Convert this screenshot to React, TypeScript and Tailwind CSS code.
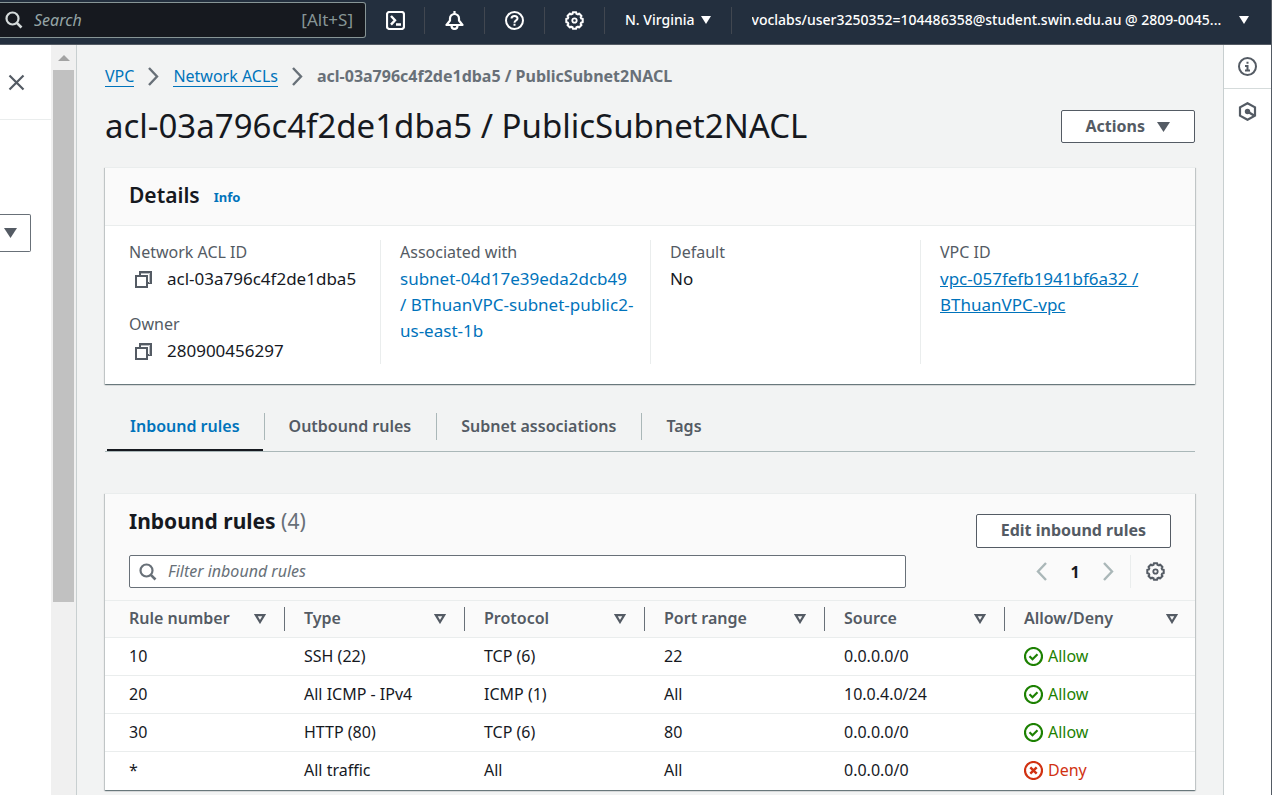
import React from "react";

const FONT = "font-['Noto_Sans','Open_Sans',sans-serif]";
const CARD =
  "border-t border-[#eaeded] bg-white shadow-[0_1px_1px_0_rgba(0,28,36,0.4),1px_1px_1px_0_rgba(0,28,36,0.15),-1px_1px_1px_0_rgba(0,28,36,0.15)]";

const gearPath = (() => {
  const points: string[] = [];
  for (let i = 0; i < 8; i++) {
    const base = i * 45;
    const corners: [number, number][] = [
      [-12, 8.4],
      [12, 8.4],
      [16, 7],
      [29, 7],
    ];
    for (const [offset, radius] of corners) {
      const a = ((base + offset) * Math.PI) / 180;
      points.push(`${(9.5 + radius * Math.sin(a)).toFixed(2)} ${(9.5 - radius * Math.cos(a)).toFixed(2)}`);
    }
  }
  return `M${points.join("L")}Z`;
})();

function Icon({ size = 19, className = "", children }: { size?: number; className?: string; children: React.ReactNode }) {
  return (
    <svg
      width={size}
      height={size}
      viewBox={`0 0 ${size} ${size}`}
      fill="none"
      stroke="currentColor"
      strokeWidth="2"
      className={`shrink-0 ${className}`}
      aria-hidden="true"
    >
      {children}
    </svg>
  );
}

const Gear = ({ className }: { className?: string }) => (
  <Icon className={className}>
    <path d={gearPath} strokeLinejoin="round" />
    <circle cx="9.5" cy="9.5" r="2.2" strokeWidth="1.8" />
  </Icon>
);

const Magnifier = ({ className }: { className?: string }) => (
  <Icon size={18} className={className}>
    <circle cx="7.5" cy="7.5" r="6" strokeWidth="2.2" />
    <path d="M11.800 11.800 16.500 16.500" strokeWidth="2.6" />
  </Icon>
);

const CloudShell = () => (
  <Icon>
    <rect x="1" y="1" width="17" height="17" rx="2.5" strokeWidth="2.2" />
    <path d="M5 5 9 9.300 5 13.600M10 13.500h5" strokeWidth="2.400" />
  </Icon>
);

const Bell = () => (
  <Icon>
    <path d="M1.500 14h16L14 9.500V7.500a4.500 4.500 0 0 0-9 0v2Z" strokeWidth="2.200" strokeLinejoin="round" />
    <path d="M9.500 0v3M6.500 14.500c0 4.600 6 4.600 6 0" strokeWidth="2.200" />
  </Icon>
);

const Help = () => (
  <Icon>
    <circle cx="9.5" cy="9.5" r="8.500" />
    <path d="M6.500 7.500C6.500 4 12.500 4 12.500 7.500 12.500 9.500 9.500 9.300 9.500 11.700M9.500 12.800v2" />
  </Icon>
);

const Info = () => (
  <Icon>
    <circle cx="9.5" cy="9.5" r="8.5" />
    <path d="M9.500 4.800v2M7 9h2.500v4.500M7 13.500h5" />
  </Icon>
);

const Hexagon = () => (
  <Icon>
    <path d="M9.500 1.200 17 5.400v8.200L9.500 17.800 2 13.600V5.400Z" strokeWidth="2.200" />
    <circle cx="9.500" cy="9.500" r="2.700" fill="currentColor" stroke="none" />
    <path d="m9.500 9.500 6.500 4" strokeWidth="2.400" />
  </Icon>
);

const Copy = () => (
  <Icon size={17} className="text-[#545b64]">
    <path d="M5 4V1h11v11h-3" />
    <path d="M6 2.500h8.500V12" stroke="#b9bdc1" strokeWidth="1" />
    <rect x="1" y="5" width="11" height="11" fill="#fff" />
  </Icon>
);

const Chevron = ({ left = false, className = "" }: { left?: boolean; className?: string }) => (
  <svg width="11" height="19" viewBox="0 0 11 19" fill="none" stroke="currentColor" strokeWidth="2.4" className={`shrink-0 ${className}`} aria-hidden="true">
    <path d={left ? "M10 1 2 9.500l8 8.500" : "M1 1l8 8.500L1 18"} />
  </svg>
);

const Caret = ({ className = "" }: { className?: string }) => (
  <svg width="13" height="10" viewBox="0 0 13 10" preserveAspectRatio="none" fill="currentColor" className={`shrink-0 ${className}`} aria-hidden="true">
    <path d="M0 0h13L6.500 10Z" />
  </svg>
);

const SortMark = () => (
  <svg width="12" height="10" viewBox="0 0 12 10" fill="none" stroke="currentColor" strokeWidth="2.2" className="shrink-0" aria-hidden="true">
    <path d="M1.800 1.100h8.400L6 8Z" />
  </svg>
);

const Allowed = () => (
  <Icon>
    <circle cx="9.5" cy="9.5" r="8.5" strokeWidth="2.2" />
    <path d="m5.500 9.300 3 3 5-5" strokeWidth="2.2" />
  </Icon>
);

const Denied = () => (
  <Icon>
    <circle cx="9.5" cy="9.5" r="8.5" strokeWidth="2.2" />
    <path d="m6.300 6.300 6.400 6.400M12.700 6.300l-6.400 6.400" strokeWidth="2.4" />
  </Icon>
);

function TopItem({ label, children, first = false }: { label: string; children: React.ReactNode; first?: boolean }) {
  return (
    <button aria-label={label} className={`flex h-[27px] shrink-0 items-center justify-center ${first ? "w-[58px]" : "w-[60px] border-l border-[#414750]"}`}>
      {children}
    </button>
  );
}

function TopBar() {
  return (
    <header className="flex h-[45px] items-start border-b border-[#545b64] bg-[#232f3e] text-white">
      <div className="mt-0.5 flex h-9 w-[366px] shrink-0 items-center rounded-r-[3px] border border-l-0 border-[#879596] bg-[#16191f] pr-3 pl-[5px]">
        <Magnifier className="text-[#d5dbdb]" />
        <input
          type="search"
          aria-label="Search"
          placeholder="Search"
          className="ml-[11px] min-w-0 flex-1 bg-transparent text-base outline-none placeholder:text-[#95a5a6] placeholder:italic"
        />
        <span className="text-[17px] text-[#879596]">[Alt+S]</span>
      </div>
      <div className="flex h-10 min-w-0 flex-1 items-center">
        <TopItem label="CloudShell" first><CloudShell /></TopItem>
        <TopItem label="Notifications"><Bell /></TopItem>
        <TopItem label="Help"><Help /></TopItem>
        <TopItem label="Settings"><Gear /></TopItem>
        <button className="flex h-[27px] shrink-0 items-center gap-1.5 border-l border-[#414750] px-5 text-sm font-medium">
          N. Virginia
          <Caret className="h-2 w-2.5" />
        </button>
        <button className="flex h-[27px] min-w-0 flex-1 items-center justify-between gap-1.5 border-l border-[#414750] pr-[22px] pl-5 text-sm font-medium">
          <span className="truncate">voclabs/user3250352=104486358@student.swin.edu.au @ 2809-0045...</span>
          <Caret className="h-2 w-2.5" />
        </button>
      </div>
    </header>
  );
}

function SideNav() {
  return (
    <aside className="flex w-[77px] shrink-0 border-r border-[#c8cfd0]">
      <div className="flex-1 bg-white">
        <div className="flex h-[75px] items-center border-b border-[#eaeded] pl-2">
          <button aria-label="Close navigation" className="text-[#545b64]">
            <Icon size={17}><path d="m1.500 1.500 14 14M15.500 1.500l-14 14" strokeWidth="2.2" /></Icon>
          </button>
        </div>
        <button aria-label="Select a VPC" className="mt-[94px] flex h-[38px] w-[31px] items-center rounded-r-[2px] border border-l-0 border-[#687078] pl-1 text-[#545b64]">
          <Caret />
        </button>
      </div>
      <div className="flex w-[25px] flex-col items-center bg-[#f0f0f0]">
        <div className="flex h-[25px] items-center">
          <Caret className="h-1.5 w-3 rotate-180 text-[#a3a3a3]" />
        </div>
        <div className="h-[532px] w-[21px] bg-[#c1c1c1]" />
      </div>
    </aside>
  );
}

function Field({ label, copy = false, children }: { label: string; copy?: boolean; children: React.ReactNode }) {
  return (
    <div>
      <dt className="leading-6 text-[#545b64]">{label}</dt>
      <dd className={`mt-0.5 text-[17px] leading-[26px] ${copy ? "flex items-center gap-[15px] pl-1.5" : ""}`}>
        {copy && <button aria-label={`Copy ${label}`}><Copy /></button>}
        {children}
      </dd>
    </div>
  );
}

const COLUMN = "border-l border-[#eaeded] pl-[19px]";

function Details() {
  return (
    <section className={`mt-6 ${CARD}`}>
      <div className="flex h-[58px] items-center gap-3.5 border-b border-[#eaeded] bg-[#fafafa] px-6 pb-1">
        <h2 className="text-[21px] leading-7 font-semibold">Details</h2>
        <a href="#info" className="pt-1.5 text-[13px] font-bold text-[#0073bb]">Info</a>
      </div>
      <dl className="grid h-[158px] grid-cols-[275fr_270fr_270fr_275fr] pt-3.5 pb-5">
        <div className="flex flex-col gap-5 pl-6">
          <Field label="Network ACL ID" copy>acl-03a796c4f2de1dba5</Field>
          <Field label="Owner" copy>280900456297</Field>
        </div>
        <div className={COLUMN}>
          <Field label="Associated with">
            <a href="#subnet" className="text-[#0073bb]">
              subnet-04d17e39eda2dcb49<br />/ BThuanVPC-subnet-public2-<br />us-east-1b
            </a>
          </Field>
        </div>
        <div className={COLUMN}>
          <Field label="Default">No</Field>
        </div>
        <div className={COLUMN}>
          <Field label="VPC ID">
            <a href="#vpc" className="text-[#0073bb] underline">
              vpc-057fefb1941bf6a32 /<br />BThuanVPC-vpc
            </a>
          </Field>
        </div>
      </dl>
    </section>
  );
}

function Tabs() {
  const tabs = ["Inbound rules", "Outbound rules", "Subnet associations", "Tags"];
  return (
    <div role="tablist" className="mt-[29px] flex h-[39px] border-b border-[#aab7b8] pl-0.5 font-semibold text-[#545b64]">
      {tabs.map((tab, i) => (
        <div key={tab} className="flex items-start">
          {i > 0 && <span className="h-[27px] w-px bg-[#aab7b8]" />}
          <button
            role="tab"
            aria-selected={i === 0}
            className={`mr-px h-[38px] border-b-2 pb-2.5 ${i === 0 ? "border-[#16191f] px-[23px] text-[#0073bb]" : "border-transparent px-6"}`}
          >
            {tab}
          </button>
        </div>
      ))}
    </div>
  );
}

const HEADINGS = ["Rule number", "Type", "Protocol", "Port range", "Source", "Allow/Deny"];
const WIDTHS = ["w-[179px]", "w-[180px]", "w-[180px]", "w-[180px]", "w-[180px]", ""];
const RULES = [
  ["10", "SSH (22)", "TCP (6)", "22", "0.0.0.0/0", "Allow"],
  ["20", "All ICMP - IPv4", "ICMP (1)", "All", "10.0.4.0/24", "Allow"],
  ["30", "HTTP (80)", "TCP (6)", "80", "0.0.0.0/0", "Allow"],
  ["*", "All traffic", "All", "All", "0.0.0.0/0", "Deny"],
];

function InboundRules() {
  return (
    <section className={`mt-[41px] ${CARD}`}>
      <div className="bg-[#fafafa] px-6 py-3">
        <div className="flex items-start justify-between">
          <h2 className="text-[21px] leading-[30px] font-bold">
            Inbound rules <span className="font-normal text-[#687078]">(4)</span>
          </h2>
          <button className="mt-2 h-[34px] rounded-[2px] border border-[#545b64] bg-white px-6 pb-0.5 font-bold text-[#545b64]">
            Edit inbound rules
          </button>
        </div>
        <div className="mt-[7px] flex items-center justify-between">
          <label className="flex h-[33px] w-[777px] min-w-0 items-center rounded-[2px] border border-[#687078] bg-white pl-[9px] text-[#687078]">
            <Magnifier />
            <input
              aria-label="Filter inbound rules"
              placeholder="Filter inbound rules"
              className="ml-[11px] min-w-0 flex-1 bg-transparent pb-0.5 outline-none placeholder:text-[#687078] placeholder:italic"
            />
          </label>
          <div className="flex items-center">
            <button aria-label="Previous page" className="text-[#aab7b8]"><Chevron left /></button>
            <span className="w-14 text-center font-bold">1</span>
            <button aria-label="Next page" className="text-[#aab7b8]"><Chevron /></button>
            <button aria-label="Preferences" className="ml-4 flex h-[33px] items-center border-l border-[#eaeded] pr-1.5 pl-[15px] text-[#545b64]">
              <Gear />
            </button>
          </div>
        </div>
      </div>
      <table className="w-full table-fixed text-left">
        <thead>
          <tr className="h-[37px] border-y border-[#eaeded] bg-[#fafafa] text-[#545b64]">
            {HEADINGS.map((heading, i) => (
              <th key={heading} className={`p-0 font-semibold ${WIDTHS[i]}`}>
                <div className={`flex h-6 items-center justify-between ${i === 0 ? "pl-6" : "border-l border-[#687078] pl-[19px]"} ${i === 5 ? "pr-[17px]" : "pr-[18px]"}`}>
                  <span className="pb-0.5">{heading}</span>
                  <button aria-label={`Sort by ${heading}`}><SortMark /></button>
                </div>
              </th>
            ))}
          </tr>
        </thead>
        <tbody>
          {RULES.map((rule) => (
            <tr key={rule[0]} className="h-[38px] border-b border-[#eaeded] last:border-b-0">
              {rule.map((value, i) => (
                <td key={i} className={i === 0 ? "p-0 pb-0.5 pl-6" : i < 5 ? "p-0 pb-0.5 pl-5" : "p-0 pl-5"}>
                  {i < 5 ? value : (
                    <span className={`flex items-center gap-[5px] ${value === "Allow" ? "text-[#1d8102]" : "text-[#d13212]"}`}>
                      {value === "Allow" ? <Allowed /> : <Denied />}
                      <span className="pb-0.5">{value}</span>
                    </span>
                  )}
                </td>
              ))}
            </tr>
          ))}
        </tbody>
      </table>
    </section>
  );
}

export default function App() {
  return (
    <div className={`flex min-h-screen flex-col border-r border-[#545b64] bg-[#f2f3f3] text-base text-[#16191f] ${FONT}`}>
      <TopBar />
      <div className="flex flex-1">
        <SideNav />
        <main className="min-w-0 flex-1 px-7 pt-5 pb-1">
          <nav aria-label="Breadcrumb" className="flex h-[22px] items-center gap-3.5 leading-5">
            <a href="#vpc-home" className="border-b border-[#0073bb] text-[#0073bb]">VPC</a>
            <Chevron className="text-[#687078]" />
            <a href="#acls" className="border-b border-[#0073bb] text-[#0073bb]">Network ACLs</a>
            <Chevron className="text-[#687078]" />
            <span className="font-bold text-[#687078]">acl-03a796c4f2de1dba5 / PublicSubnet2NACL</span>
          </nav>
          <div className="mt-[23px] flex h-[33px] items-center justify-between">
            <h1 className="pb-0.5 text-[33px] leading-8">acl-03a796c4f2de1dba5 / PublicSubnet2NACL</h1>
            <button className="flex h-[33px] items-center gap-3 rounded-[2px] border border-[#545b64] bg-white px-6 font-bold text-[#545b64]">
              <span className="pb-0.5">Actions</span>
              <Caret />
            </button>
          </div>
          <Details />
          <Tabs />
          <InboundRules />
        </main>
        <aside className="w-12 shrink-0 border-l border-[#c8cfd0] bg-white text-[#545b64]">
          <button aria-label="Info panel" className="flex h-11 w-full items-center justify-center border-b border-[#d5dbdb]"><Info /></button>
          <button aria-label="Diagnostics" className="flex h-11 w-full items-center justify-center"><Hexagon /></button>
        </aside>
      </div>
    </div>
  );
}
